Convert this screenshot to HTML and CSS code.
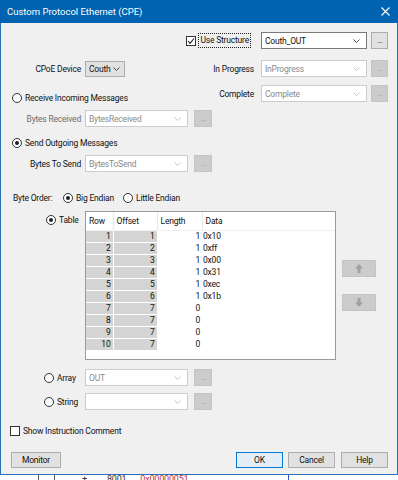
FILE: index.html
```html
<!DOCTYPE html>
<html lang="en">
<head>
    <meta charset="UTF-8">
    <title>Custom Protocol Ethernet (CPE)</title>
    <link rel="stylesheet" href="styles.css">
</head>
<body>
    <div class="dialog">
        <div class="titlebar">
            <span class="title">Custom Protocol Ethernet (CPE)</span>
            <svg class="close" width="9" height="9" viewBox="0 0 9 9"><path d="M0.5 0.5 L8.5 8.5 M8.5 0.5 L0.5 8.5" stroke="#fff" stroke-width="1.1"/></svg>
        </div>

        <div class="content">
            <!-- structure selector -->
            <div class="top-row">
                <span class="check checked">
                    <svg width="8" height="8" viewBox="0 0 8 8"><path d="M1 4 L3 6.3 L7 1.5" fill="none" stroke="#222" stroke-width="1.1"/></svg>
                </span>
                <span class="focus-label">Use Structure</span>
                <div class="combo wide">
                    <span>Couth_OUT</span>
                    <svg class="chev" width="7" height="4" viewBox="0 0 7 4"><polyline points="0.5,0.5 3.5,3.5 6.5,0.5" fill="none" stroke="#444" stroke-width="1"/></svg>
                </div>
                <div class="dots-btn">...</div>
            </div>

            <div class="upper">
                <div class="left-col">
                    <div class="field-row">
                        <span class="field-label">CPoE Device</span>
                        <div class="combo device">
                            <span>Couth</span>
                            <svg class="chev" width="7" height="4" viewBox="0 0 7 4"><polyline points="0.5,0.5 3.5,3.5 6.5,0.5" fill="none" stroke="#444" stroke-width="1"/></svg>
                        </div>
                    </div>

                    <div class="radio-row receive">
                        <span class="radio"></span>
                        <span>Receive Incoming Messages</span>
                    </div>
                    <div class="field-row sub">
                        <span class="field-label disabled-text">Bytes Received</span>
                        <div class="combo mid disabled">
                            <span>BytesReceived</span>
                            <svg class="chev" width="7" height="4" viewBox="0 0 7 4"><polyline points="0.5,0.5 3.5,3.5 6.5,0.5" fill="none" stroke="#c4c4c4" stroke-width="1"/></svg>
                        </div>
                        <div class="dots-btn disabled small">...</div>
                    </div>

                    <div class="radio-row send">
                        <span class="radio on"></span>
                        <span>Send Outgoing Messages</span>
                    </div>
                    <div class="field-row sub">
                        <span class="field-label">Bytes To Send</span>
                        <div class="combo mid disabled">
                            <span>BytesToSend</span>
                            <svg class="chev" width="7" height="4" viewBox="0 0 7 4"><polyline points="0.5,0.5 3.5,3.5 6.5,0.5" fill="none" stroke="#c4c4c4" stroke-width="1"/></svg>
                        </div>
                        <div class="dots-btn disabled small">...</div>
                    </div>
                </div>

                <div class="right-col">
                    <div class="field-row">
                        <span class="right-label">In Progress</span>
                        <div class="combo wide disabled">
                            <span>InProgress</span>
                            <svg class="chev" width="7" height="4" viewBox="0 0 7 4"><polyline points="0.5,0.5 3.5,3.5 6.5,0.5" fill="none" stroke="#c4c4c4" stroke-width="1"/></svg>
                        </div>
                        <div class="dots-btn disabled">...</div>
                    </div>
                    <div class="field-row">
                        <span class="right-label">Complete</span>
                        <div class="combo wide disabled">
                            <span>Complete</span>
                            <svg class="chev" width="7" height="4" viewBox="0 0 7 4"><polyline points="0.5,0.5 3.5,3.5 6.5,0.5" fill="none" stroke="#c4c4c4" stroke-width="1"/></svg>
                        </div>
                        <div class="dots-btn disabled">...</div>
                    </div>
                </div>
            </div>

            <div class="byte-order">
                <span class="order-label">Byte Order:</span>
                <span class="order-opt big"><span class="radio on"></span>Big Endian</span>
                <span class="order-opt"><span class="radio"></span>Little Endian</span>
            </div>

            <!-- table mode -->
            <div class="table-section">
                <div class="side-label table-label">
                    <span class="radio on"></span><span>Table</span>
                </div>
                <div class="grid">
                    <table>
                        <thead>
                            <tr><th class="c-row">Row</th><th class="c-off">Offset</th><th class="c-len">Length</th><th class="c-data">Data</th></tr>
                        </thead>
                        <tbody>
                            <tr><td class="ro">1</td><td class="ro">1</td><td class="num">1</td><td>0x10</td></tr>
                            <tr><td class="ro">2</td><td class="ro">2</td><td class="num">1</td><td>0xff</td></tr>
                            <tr><td class="ro">3</td><td class="ro">3</td><td class="num">1</td><td>0x00</td></tr>
                            <tr><td class="ro">4</td><td class="ro">4</td><td class="num">1</td><td>0x31</td></tr>
                            <tr><td class="ro">5</td><td class="ro">5</td><td class="num">1</td><td>0xec</td></tr>
                            <tr><td class="ro">6</td><td class="ro">6</td><td class="num">1</td><td>0x1b</td></tr>
                            <tr><td class="ro">7</td><td class="ro">7</td><td class="num">0</td><td></td></tr>
                            <tr><td class="ro">8</td><td class="ro">7</td><td class="num">0</td><td></td></tr>
                            <tr><td class="ro">9</td><td class="ro">7</td><td class="num">0</td><td></td></tr>
                            <tr><td class="ro">10</td><td class="ro">7</td><td class="num">0</td><td></td></tr>
                        </tbody>
                    </table>
                </div>
                <div class="move-btns">
                    <div class="move-btn">
                        <svg width="8" height="9" viewBox="0 0 8 9"><path d="M4 0 L8 4.5 H5.6 V9 H2.4 V4.5 H0 Z" fill="#a2a2a2"/></svg>
                    </div>
                    <div class="move-btn">
                        <svg width="8" height="9" viewBox="0 0 8 9"><path d="M4 9 L8 4.5 H5.6 V0 H2.4 V4.5 H0 Z" fill="#a2a2a2"/></svg>
                    </div>
                </div>
            </div>

            <div class="field-row array-row">
                <div class="side-label"><span class="radio"></span><span>Array</span></div>
                <div class="combo mid disabled">
                    <span>OUT</span>
                    <svg class="chev" width="7" height="4" viewBox="0 0 7 4"><polyline points="0.5,0.5 3.5,3.5 6.5,0.5" fill="none" stroke="#c4c4c4" stroke-width="1"/></svg>
                </div>
                <div class="dots-btn disabled small">...</div>
            </div>

            <div class="field-row string-row">
                <div class="side-label"><span class="radio"></span><span>String</span></div>
                <div class="combo mid disabled">
                    <span></span>
                    <svg class="chev" width="7" height="4" viewBox="0 0 7 4"><polyline points="0.5,0.5 3.5,3.5 6.5,0.5" fill="none" stroke="#c4c4c4" stroke-width="1"/></svg>
                </div>
                <div class="dots-btn disabled small">...</div>
            </div>

            <div class="comment-row">
                <span class="check"></span>
                <span>Show Instruction Comment</span>
            </div>

            <div class="footer">
                <button class="btn monitor">Monitor</button>
                <button class="btn ok">OK</button>
                <button class="btn cancel">Cancel</button>
                <button class="btn help">Help</button>
            </div>
        </div>
    </div>

    <div class="behind">
        <span class="vline first"></span>
        <span class="vline"></span>
        <span class="plus">+</span>
        <span class="addr">8001</span>
        <span class="val">0x00000051</span>
        <span class="vline blue"></span>
    </div>
</body>
</html>
```

FILE: styles.css
```css
* { margin: 0; padding: 0; box-sizing: border-box; }

body {
    font-family: Roboto, 'Liberation Sans', sans-serif;
    font-size: 8.5px;
    letter-spacing: -0.2px;
    line-height: 12px;
    color: #111;
    background: #fff;
    width: 398px;
    height: 480px;
    overflow: hidden;
    white-space: nowrap;
}

.dialog {
    width: 398px;
    height: 475px;
    background: #f0f0f0;
    border: 1px solid #2a6fb3;
    border-top: none;
    display: flex;
    flex-direction: column;
}

.titlebar {
    height: 23px;
    margin: 0 -1px;
    padding: 0 8px 0 7px;
    background: #0063b1;
    color: #fff;
    font-size: 9.5px;
    letter-spacing: 0;
    display: flex;
    align-items: center;
    justify-content: space-between;
}

.content {
    flex: 1;
    padding: 9px 9px 0 9px;
    display: flex;
    flex-direction: column;
}

/* common controls */
.check {
    width: 10px;
    height: 10px;
    border: 1px solid #333;
    background: #fff;
    display: flex;
    align-items: center;
    justify-content: center;
    flex-shrink: 0;
}

.radio {
    width: 10px;
    height: 10px;
    border: 1px solid #333;
    border-radius: 50%;
    background: #fff;
    display: inline-flex;
    align-items: center;
    justify-content: center;
    flex-shrink: 0;
    margin-right: 3px;
}

.radio.on::after {
    content: "";
    width: 4px;
    height: 4px;
    border-radius: 50%;
    background: #222;
}

.combo {
    height: 17px;
    background: #fff;
    border: 1px solid #7a7a7a;
    display: flex;
    align-items: center;
    justify-content: space-between;
    padding: 0 6px 0 3px;
    flex-shrink: 0;
}

.combo.wide { width: 106px; }
.combo.mid { width: 103px; }

.combo.device {
    width: 40px;
    height: 16px;
    background: #e1e1e1;
    border-color: #adadad;
    padding: 0 4px 0 3px;
}

.combo.disabled {
    border-color: #cccccc;
    color: #8a8a8a;
}

.dots-btn {
    width: 17px;
    height: 17px;
    margin-left: 4px;
    background: #e1e1e1;
    border: 1px solid #adadad;
    color: #333;
    font-size: 8px;
    line-height: 15px;
    text-align: center;
    letter-spacing: -0.5px;
    flex-shrink: 0;
}

.dots-btn.small {
    width: 18px;
    margin-left: 6px;
}

.dots-btn.disabled {
    background: #cccccc;
    border-color: #c4c4c4;
    color: #a0a0a0;
}

.disabled-text { color: #6d6d6d; }

/* top row */
.top-row {
    display: flex;
    justify-content: flex-end;
    align-items: center;
    height: 17px;
}

.focus-label {
    border: 1px dotted #222;
    padding: 0 1px;
    margin-left: 2px;
    margin-right: 10px;
    line-height: 13px;
}

/* upper area */
.upper {
    display: flex;
    margin-top: 11px;
}

.left-col {
    display: flex;
    flex-direction: column;
}

.right-col {
    margin-left: auto;
    display: flex;
    flex-direction: column;
    align-items: flex-end;
    gap: 8px;
}

.field-row {
    display: flex;
    align-items: center;
    height: 17px;
}

.field-label {
    width: 71px;
    margin-right: 4px;
    text-align: right;
    flex-shrink: 0;
}

.right-label {
    margin-right: 7px;
}

.radio-row {
    display: flex;
    align-items: center;
    height: 12px;
    margin-left: 2px;
}

.radio-row.receive { margin-top: 15px; }
.radio-row.send { margin-top: 10px; }
.field-row.sub { margin-top: 6px; }

/* byte order */
.byte-order {
    display: flex;
    align-items: center;
    height: 12px;
    margin-top: 20px;
    padding-left: 3px;
}

.order-label { width: 50px; }

.order-opt {
    display: flex;
    align-items: center;
}

.order-opt.big { width: 60px; }

/* table */
.table-section {
    display: flex;
    align-items: flex-start;
    margin-top: 7px;
}

.side-label {
    width: 75px;
    padding-left: 34px;
    display: flex;
    align-items: center;
    height: 12px;
    flex-shrink: 0;
}

.table-label {
    margin-top: 3px;
    padding-left: 36px;
}

.grid {
    width: 251px;
    height: 149px;
    border: 1px solid #9a9a9a;
    background: #fff;
    overflow: hidden;
    flex-shrink: 0;
}

.grid table {
    width: 249px;
    border-collapse: collapse;
    table-layout: fixed;
}

.grid th {
    height: 18px;
    font-weight: normal;
    text-align: left;
    padding-left: 3px;
    border-right: 1px solid #e8e8e8;
    border-bottom: 1px solid #f0f0f0;
}

.grid th.c-data { border-right: none; }

.c-row { width: 27px; }
.c-off { width: 44px; }
.c-len { width: 45px; }

.grid td {
    height: 12px;
    line-height: 11px;
    padding: 0 2px 0 1px;
}

.grid td.ro {
    background: #d4d4d4;
    text-align: right;
    border-right: 1px solid #fff;
    border-bottom: 1px solid #fff;
}

.grid td.num { text-align: right; }

.move-btns {
    display: flex;
    flex-direction: column;
    gap: 17px;
    margin-left: 6px;
    padding-top: 49px;
}

.move-btn {
    width: 34px;
    height: 17px;
    background: #cccccc;
    border: 1px solid #c4c4c4;
    display: flex;
    align-items: center;
    justify-content: center;
}

/* array / string */
.array-row { margin-top: 9px; }
.string-row { margin-top: 7px; }

.comment-row {
    display: flex;
    align-items: center;
    height: 12px;
    margin-top: 15px;
}

.comment-row .check { margin-right: 3px; }

/* footer buttons */
.footer {
    display: flex;
    margin-top: 15px;
    padding-left: 1px;
}

.btn {
    width: 47px;
    height: 16px;
    background: #e1e1e1;
    border: 1px solid #adadad;
    font-family: inherit;
    font-size: 8.5px;
    letter-spacing: -0.2px;
    color: #111;
}

.btn.monitor { width: 50px; }
.btn.ok { margin-left: auto; border-color: #0078d7; background: #e5eef7; }
.btn.cancel { margin-left: 5px; }
.btn.help { margin-left: 6px; }

/* window behind the dialog */
.behind {
    height: 5px;
    background: #fff;
    display: flex;
    overflow: hidden;
    line-height: 9px;
    font-size: 9px;
}

.behind .vline {
    width: 1px;
    height: 5px;
    background: #555;
    margin-left: 15px;
}

.behind .vline.first { margin-left: 38px; }
.behind .plus { margin-left: 27px; color: #333; }
.behind .addr { margin-left: 20px; color: #333; }
.behind .val { margin-left: 14px; color: #c03030; }
.behind .vline.blue { background: #3050d0; margin-left: 100px; }
```
